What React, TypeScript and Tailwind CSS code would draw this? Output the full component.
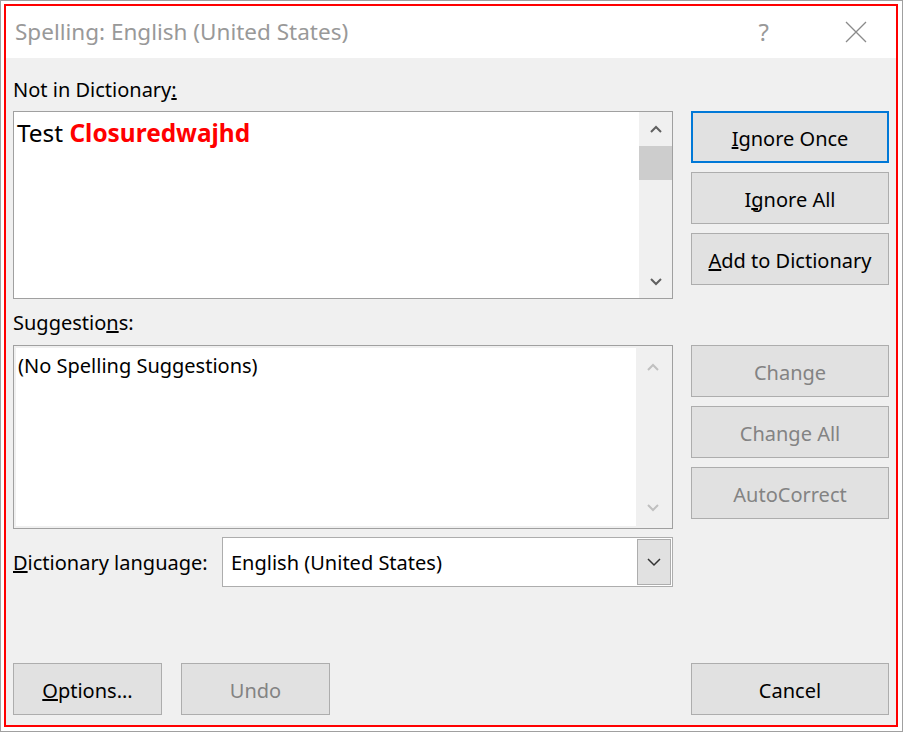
import React from "react";

const font = { fontFamily: '"Noto Sans", "Open Sans", sans-serif' };

function Chevron({ dir, color, size = 14 }: { dir: "up" | "down"; color: string; size?: number }) {
  return (
    <svg width={size} height={size} viewBox="0 0 14 14" fill="none">
      <path
        d={dir === "up" ? "M2 10 L7 5 L12 10" : "M2 5 L7 10 L12 5"}
        stroke={color}
        strokeWidth="2"
      />
    </svg>
  );
}

function Btn({
  children,
  focused,
  disabled,
  className = "",
}: {
  children: React.ReactNode;
  focused?: boolean;
  disabled?: boolean;
  className?: string;
}) {
  return (
    <div
      className={
        "h-[52px] flex items-center justify-center pt-[3px] bg-[#e1e1e1] text-[20px] " +
        (focused ? "border-2 border-[#0078d7] " : "border border-[#adadad] ") +
        (disabled ? "text-[#838383] " : "text-black ") +
        className
      }
    >
      {children}
    </div>
  );
}

export default function App() {
  return (
    <div
      className="w-[903px] h-[732px] border border-[#a0a0a0] bg-white pt-[3px] pl-[3px] pr-[4px] pb-[4px]"
      style={font}
    >
      <div className="h-full border-2 border-[#ff0000] flex flex-col">
        {/* title bar */}
        <div className="h-[52px] bg-white flex items-center pl-[9px] shrink-0">
          <span className="text-[22.5px] text-[#999999] flex-1">Spelling: English (United States)</span>
          <span className="text-[24px] text-[#999999] mr-[76px] leading-none">?</span>
          <svg width="22" height="22" viewBox="0 0 22 22" className="mr-[29px]">
            <path d="M1 1 L21 21 M21 1 L1 21" stroke="#8a8a8a" strokeWidth="1.3" />
          </svg>
        </div>

        {/* body */}
        <div className="flex-1 bg-[#f0f0f0] pl-[7px] pr-[7px] pb-[10px] flex flex-col">
          <div className="flex gap-[18px]">
            {/* left column */}
            <div className="w-[660px] flex flex-col">
              <div className="h-[53px] pt-[20px] text-[20px] leading-[24px] text-black">
                Not in Dictionary<u>:</u>
              </div>
              <div className="h-[188px] border border-[#a0a0a0] bg-white flex">
                <div className="flex-1 pl-[3px] pt-[5px] text-[24.4px] leading-[32px]">
                  <span className="text-black">Test </span>
                  <span className="text-[#ff0000] font-bold">Closuredwajhd</span>
                </div>
                <div className="w-[33px] bg-[#f0f0f0] flex flex-col items-center">
                  <div className="h-[34px] flex items-center justify-center">
                    <Chevron dir="up" color="#606060" />
                  </div>
                  <div className="w-full h-[34px] bg-[#cdcdcd]" />
                  <div className="flex-1" />
                  <div className="h-[34px] flex items-center justify-center">
                    <Chevron dir="down" color="#606060" />
                  </div>
                </div>
              </div>
              <div className="h-[46px] pt-[12px] text-[20px] leading-[24px] text-black">
                Suggestio<u>n</u>s:
              </div>
              <div className="h-[184px] border border-[#a0a0a0] bg-[#f0f0f0] flex p-[2px]">
                <div className="flex-1 bg-white pl-[2px] pt-[6px] text-[20px] leading-[24px] text-black">
                  (No Spelling Suggestions)
                </div>
                <div className="w-[34px] flex flex-col items-center">
                  <div className="h-[38px] flex items-center justify-center">
                    <Chevron dir="up" color="#c0c0c0" />
                  </div>
                  <div className="flex-1" />
                  <div className="h-[38px] flex items-center justify-center">
                    <Chevron dir="down" color="#c0c0c0" />
                  </div>
                </div>
              </div>
              <div className="mt-[8px] flex items-center h-[50px]">
                <div className="w-[209px] pt-[2px] text-[20px] text-black">
                  <u>D</u>ictionary language:
                </div>
                <div className="flex-1 h-[50px] border border-[#adadad] bg-white flex items-center p-[1px]">
                  <div className="flex-1 pl-[7px] pt-[2px] text-[20px] text-black">English (United States)</div>
                  <div className="w-[34px] h-full bg-[#e1e1e1] border border-[#adadad] flex items-center justify-center">
                    <svg width="14" height="10" viewBox="0 0 14 10" fill="none">
                      <path d="M1 2 L7 8 L13 2" stroke="#333333" strokeWidth="1.5" />
                    </svg>
                  </div>
                </div>
              </div>
            </div>

            {/* right column */}
            <div className="w-[198px] pt-[53px] flex flex-col">
              <div className="flex flex-col gap-[9px]">
                <Btn focused>
                  <span>
                    <u>I</u>gnore Once
                  </span>
                </Btn>
                <Btn>
                  <span>
                    I<u>g</u>nore All
                  </span>
                </Btn>
                <Btn>
                  <span>
                    <u>A</u>dd to Dictionary
                  </span>
                </Btn>
              </div>
              <div className="flex flex-col gap-[9px] mt-[60px]">
                <Btn disabled>Change</Btn>
                <Btn disabled>Change All</Btn>
                <Btn disabled>AutoCorrect</Btn>
              </div>
            </div>
          </div>

          {/* bottom buttons */}
          <div className="mt-auto flex">
            <Btn className="w-[149px]">
              <span>
                <u>O</u>ptions...
              </span>
            </Btn>
            <Btn disabled className="w-[149px] ml-[19px]">
              Undo
            </Btn>
            <Btn className="w-[198px] ml-auto">Cancel</Btn>
          </div>
        </div>
      </div>
    </div>
  );
}
